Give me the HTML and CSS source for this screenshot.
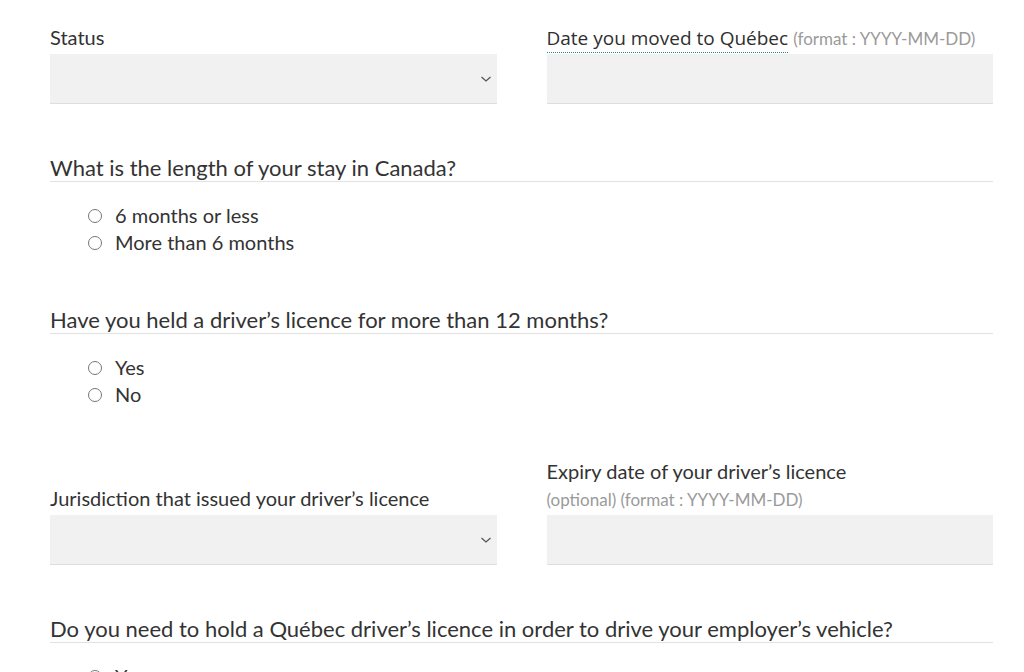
FILE: index.html
```html
<!DOCTYPE html>
<html lang="en">

<head>
  <meta charset="UTF-8">
  <meta name="viewport" content="width=device-width, initial-scale=1.0">
  <title>Driver's licence</title>
  <link rel="stylesheet" href="styles.css">
</head>

<body>
  <form class="form-container">

    <!-- Status / date moved -->
    <div class="form-row">
      <div class="field">
        <label class="field-label" for="status">Status</label>
        <div class="select-wrap">
          <select id="status" class="select"></select>
          <svg class="chevron" width="12" height="8" viewBox="0 0 12 8"><path d="M1.5 2 L6 6 L10.5 2" /></svg>
        </div>
      </div>
      <div class="field">
        <label class="field-label" for="moved"><abbr class="abbr" title="Date">Date you moved to Québec</abbr> <span class="hint">(format : YYYY-MM-DD)</span></label>
        <input id="moved" class="text-input" type="text">
      </div>
    </div>

    <fieldset class="question">
      <legend class="question-title">What is the length of your stay in Canada?</legend>
      <div class="options">
        <label class="option"><input type="radio" name="stay"> 6 months or less</label>
        <label class="option"><input type="radio" name="stay"> More than 6 months</label>
      </div>
    </fieldset>

    <fieldset class="question">
      <legend class="question-title">Have you held a driver’s licence for more than 12 months?</legend>
      <div class="options">
        <label class="option"><input type="radio" name="held"> Yes</label>
        <label class="option"><input type="radio" name="held"> No</label>
      </div>
    </fieldset>

    <!-- Jurisdiction / expiry -->
    <div class="form-row">
      <div class="field">
        <label class="field-label" for="jurisdiction">Jurisdiction that issued your driver’s licence</label>
        <div class="select-wrap">
          <select id="jurisdiction" class="select"></select>
          <svg class="chevron" width="12" height="8" viewBox="0 0 12 8"><path d="M1.5 2 L6 6 L10.5 2" /></svg>
        </div>
      </div>
      <div class="field">
        <label class="field-label" for="expiry">Expiry date of your driver’s licence<br><span class="hint">(optional) (format : YYYY-MM-DD)</span></label>
        <input id="expiry" class="text-input" type="text">
      </div>
    </div>

    <fieldset class="question">
      <legend class="question-title">Do you need to hold a Québec driver’s licence in order to drive your employer’s vehicle?</legend>
      <div class="options">
        <label class="option"><input type="radio" name="employer"> Yes</label>
        <label class="option"><input type="radio" name="employer"> No</label>
      </div>
    </fieldset>

  </form>
</body>

</html>
```

FILE: styles.css
```css
body {
  margin: 0;
  font-family: Lato, "Open Sans", sans-serif;
  color: #333;
  background-color: #fff;
  overflow: hidden;
}

.form-container {
  padding: 24px 31px 0 50px;
}

.form-row {
  display: grid;
  grid-template-columns: 1fr 1fr;
  column-gap: 50px;
  align-items: end;
  margin-top: 50px;
}

.form-row:first-child {
  margin-top: 0;
}

.field-label {
  display: block;
  height: auto;
  font-size: 20px;
  line-height: 27px;
  margin-bottom: 3px;
  color: #333;
}

.abbr {
  font-family: "Open Sans", sans-serif;
  font-size: 19px;
  line-height: 1;
  color: #2f2f2f;
  text-decoration: none;
  border-bottom: 1px dotted #2a8a8a;
  padding-bottom: 1px;
}

.hint {
  font-size: 17px;
  line-height: 1;
  color: #9a9a9a;
}

.select-wrap {
  position: relative;
}

.select,
.text-input {
  display: block;
  width: 100%;
  height: 50px;
  box-sizing: border-box;
  margin: 0;
  padding: 0 12px;
  background-color: #f1f1f1;
  border: none;
  border-bottom: 1px solid #dedede;
  border-radius: 0;
  font-family: inherit;
  font-size: 16px;
  color: #333;
  appearance: none;
  -webkit-appearance: none;
}

.chevron {
  position: absolute;
  right: 5px;
  top: 21px;
  fill: none;
  stroke: #555;
  stroke-width: 1.3;
}

.question {
  margin: 50px 0 0 0;
  padding: 0;
  border: none;
  min-width: 0;
}

.question-title {
  display: block;
  width: 100%;
  padding: 0;
  font-size: 22px;
  line-height: 27px;
  color: #333;
  border-bottom: 1px solid #e2e2e2;
}

.options {
  margin-top: 20px;
  padding-left: 38px;
}

.option {
  display: flex;
  align-items: center;
  font-size: 20px;
  line-height: 27px;
  color: #333;
}

.option input {
  margin: 0 13px 0 0;
  width: 14px;
  height: 14px;
}
```
